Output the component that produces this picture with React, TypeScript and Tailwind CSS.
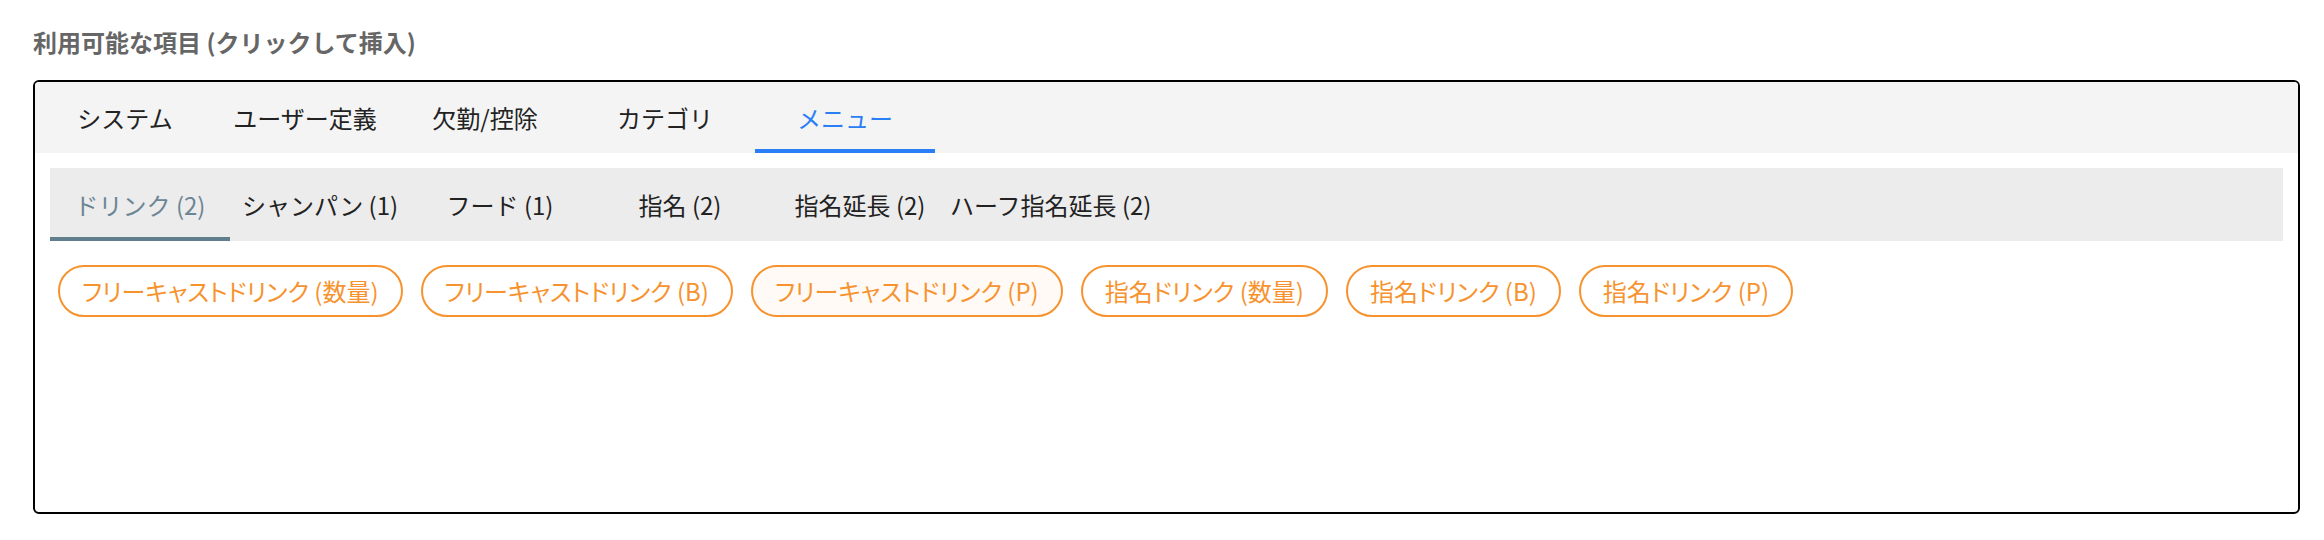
const mainTabs = ["システム", "ユーザー定義", "欠勤/控除", "カテゴリ", "メニュー"];
const subTabs = ["ドリンク (2)", "シャンパン (1)", "フード (1)", "指名 (2)", "指名延長 (2)", "ハーフ指名延長 (2)"];
const chips = [
  "フリーキャストドリンク (数量)",
  "フリーキャストドリンク (B)",
  "フリーキャストドリンク (P)",
  "指名ドリンク (数量)",
  "指名ドリンク (B)",
  "指名ドリンク (P)",
];

export default function App() {
  const activeMain = 4;
  const activeSub = 0;
  const hovered = 2;

  return (
    <div className="w-[2324px] h-[540px] bg-white pl-[33px] pr-[24px] pt-[24px] font-['Noto_Sans_CJK_JP','Noto_Sans',sans-serif]">
      <h2 className="text-[24px] leading-[36px] font-bold text-[#666666] mb-[20px]">
        利用可能な項目 (クリックして挿入)
      </h2>
      <div className="h-[434px] border-2 border-black rounded-[6px] overflow-hidden">
        <div className="flex h-[71px] bg-[#f4f4f4]">
          {mainTabs.map((tab, i) => (
            <button
              key={tab}
              className={
                i === activeMain
                  ? "min-w-[180px] h-full flex items-center justify-center pt-[5px] border-b-4 border-[#2b7ff6] text-[24px] text-[#2b7ff6]"
                  : "min-w-[180px] h-full flex items-center justify-center pt-[5px] border-b-4 border-transparent text-[24px] text-[#222222]"
              }
            >
              {tab}
            </button>
          ))}
        </div>
        <div className="px-[15px] pt-[15px]">
          <div className="flex h-[73px] bg-[#ececec]">
            {subTabs.map((tab, i) => (
              <button
                key={tab}
                className={
                  i === activeSub
                    ? "min-w-[180px] h-full flex items-center justify-center pt-[5px] border-b-4 border-[#5f7f8c] text-[24px] text-[#6b8694]"
                    : "min-w-[180px] h-full flex items-center justify-center pt-[5px] border-b-4 border-transparent text-[24px] text-[#222222]"
                }
              >
                {tab}
              </button>
            ))}
          </div>
          <div className="flex flex-wrap gap-[18px] mt-[24px] pl-[8px]">
            {chips.map((chip, i) => (
              <button
                key={chip}
                className={
                  i === hovered
                    ? "h-[52px] px-[22px] rounded-full border-2 border-[#f7932f] bg-[#fffaf6] text-[24px] text-[#f7932f] [font-feature-settings:'palt']"
                    : "h-[52px] px-[22px] rounded-full border-2 border-[#f7932f] bg-white text-[24px] text-[#f7932f] [font-feature-settings:'palt']"
                }
              >
                {chip}
              </button>
            ))}
          </div>
        </div>
      </div>
    </div>
  );
}
